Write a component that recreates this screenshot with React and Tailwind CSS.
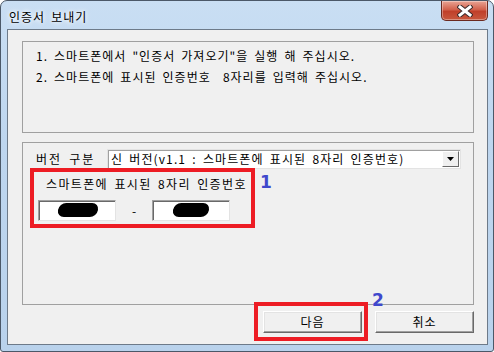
import React from "react";

const font = { fontFamily: '"Noto Sans CJK KR", "Noto Sans", sans-serif' };

function CloseButton() {
  return (
    <div className="w-[47px] h-[20px] rounded-b-[5px] border border-t-0 border-[#6b2a20] bg-[linear-gradient(#e9a494,#d2614c_45%,#c0402a_55%,#c8583e)] flex items-center justify-center shadow-[inset_0_0_0_1px_rgba(255,255,255,0.35)]">
      <svg width="16" height="12" viewBox="0 0 16 12">
        <path d="M3 2 L13 10 M13 2 L3 10" stroke="#3a2a2a" strokeWidth="5" strokeLinecap="square" />
        <path d="M3 2 L13 10 M13 2 L3 10" stroke="#ffffff" strokeWidth="3" strokeLinecap="square" />
      </svg>
    </div>
  );
}

function Input({ blobW, blobL }) {
  return (
    <div className="relative w-[78px] h-[21px] bg-white border border-t-[#a0a0a0] border-l-[#a0a0a0] border-b-[#e3e3e3] border-r-[#e3e3e3] shadow-[inset_1px_1px_0_#696969]">
      <div
        className="absolute top-[2px] h-[14px] bg-black rounded-[7px] skew-x-[-10deg]"
        style={{ left: blobL, width: blobW }}
      />
    </div>
  );
}

function Button({ children }) {
  return (
    <div className="w-[99px] h-[22px] bg-[#f0f0f0] border border-t-white border-l-white border-b-[#696969] border-r-[#696969] shadow-[inset_-1px_-1px_0_#a0a0a0,inset_1px_1px_0_#e3e3e3] flex items-center justify-center text-[12px] tracking-[1px] text-black">
      {children}
    </div>
  );
}

export default function App() {
  return (
    <div className="w-[494px] h-[352px] overflow-hidden bg-white" style={font}>
      <div className="relative w-[494px] h-[352px] rounded-t-[7px] rounded-b-[3px] border border-[#4b5868] bg-[linear-gradient(180deg,#c9def3_0%,#bed6ef_40%,#b9d2ec_100%)] flex flex-col [word-spacing:2.4px]">
        {/* Title bar */}
        <div className="h-[28px] flex justify-between items-start">
          <div className="pl-[8px] pt-[8px] text-[12px] leading-[16px] tracking-[1px] text-black [text-shadow:0_0_6px_#ffffff,0_0_4px_#ffffff]">
            인증서 보내기
          </div>
          <div className="mr-[5px]">
            <CloseButton />
          </div>
        </div>
        {/* Client area */}
        <div className="ml-[6px] mr-[5px] h-[316px] border border-[#6d7a89] bg-[#f0f0f0] pt-[11px] pl-[14px] pr-[13px] flex flex-col text-[12px] text-black">
          {/* Group 1 */}
          <div className="h-[92px] border border-[#a0a0a0] pl-[13px] pt-[3px] leading-[21px] tracking-[1px]">
            <div>1. 스마트폰에서 "인증서 가져오기"을 실행 해 주십시오.</div>
            <div>2. 스마트폰에 표시된 인증번호&nbsp;&nbsp;8자리를 입력해 주십시오.</div>
          </div>
          {/* Group 2 */}
          <div className="relative mt-[9px] h-[163px] border border-[#a0a0a0] pt-[6px]">
            <div className="flex items-center h-[20px]">
              <div className="pl-[13px] w-[84px] tracking-[2px]">버전 구분</div>
              <div className="w-[354px] h-[20px] bg-white border border-[#e3e3e3] shadow-[inset_1px_1px_0_#a0a0a0] flex items-center justify-between pl-[3px] pr-[1px]">
                <span className="tracking-[1.1px]">신 버전(v1.1 : 스마트폰에 표시된 8자리 인증번호)</span>
                <div className="w-[17px] h-[16px] bg-[#f0f0f0] border border-t-white border-l-white border-b-[#696969] border-r-[#696969] flex items-center justify-center">
                  <svg width="7" height="4" viewBox="0 0 7 4">
                    <path d="M0 0 H7 L3.5 4 Z" fill="#000" />
                  </svg>
                </div>
              </div>
            </div>
            <div className="pl-[23px] mt-[5px] leading-[20px] tracking-[1.35px]">스마트폰에 표시된 8자리 인증번호</div>
            <div className="flex items-center pl-[15px] mt-[6px]">
              <Input blobL={19} blobW={40} />
              <div className="w-[36px] text-center">-</div>
              <Input blobL={20} blobW={36} />
            </div>
            {/* annotation 1 */}
            <div className="absolute left-[7px] top-[25px] w-[225px] h-[60px] border-[4px] border-[#ed1c24]" />
            <div className="absolute left-[237px] top-[29px] text-[17px] leading-[20px] font-bold text-[#3f48cc]" style={{ fontFamily: '"DejaVu Sans", sans-serif' }}>1</div>
          </div>
          {/* Buttons */}
          <div className="relative flex justify-end gap-[13px] mt-[6px]">
            <Button>다음</Button>
            <Button>취소</Button>
            <div className="absolute left-[232px] top-[-9px] w-[114px] h-[39px] border-[4px] border-[#ed1c24]" />
            <div className="absolute left-[350px] top-[-21px] text-[17px] leading-[20px] font-bold text-[#3f48cc]" style={{ fontFamily: '"DejaVu Sans", sans-serif' }}>2</div>
          </div>
        </div>
      </div>
    </div>
  );
}
